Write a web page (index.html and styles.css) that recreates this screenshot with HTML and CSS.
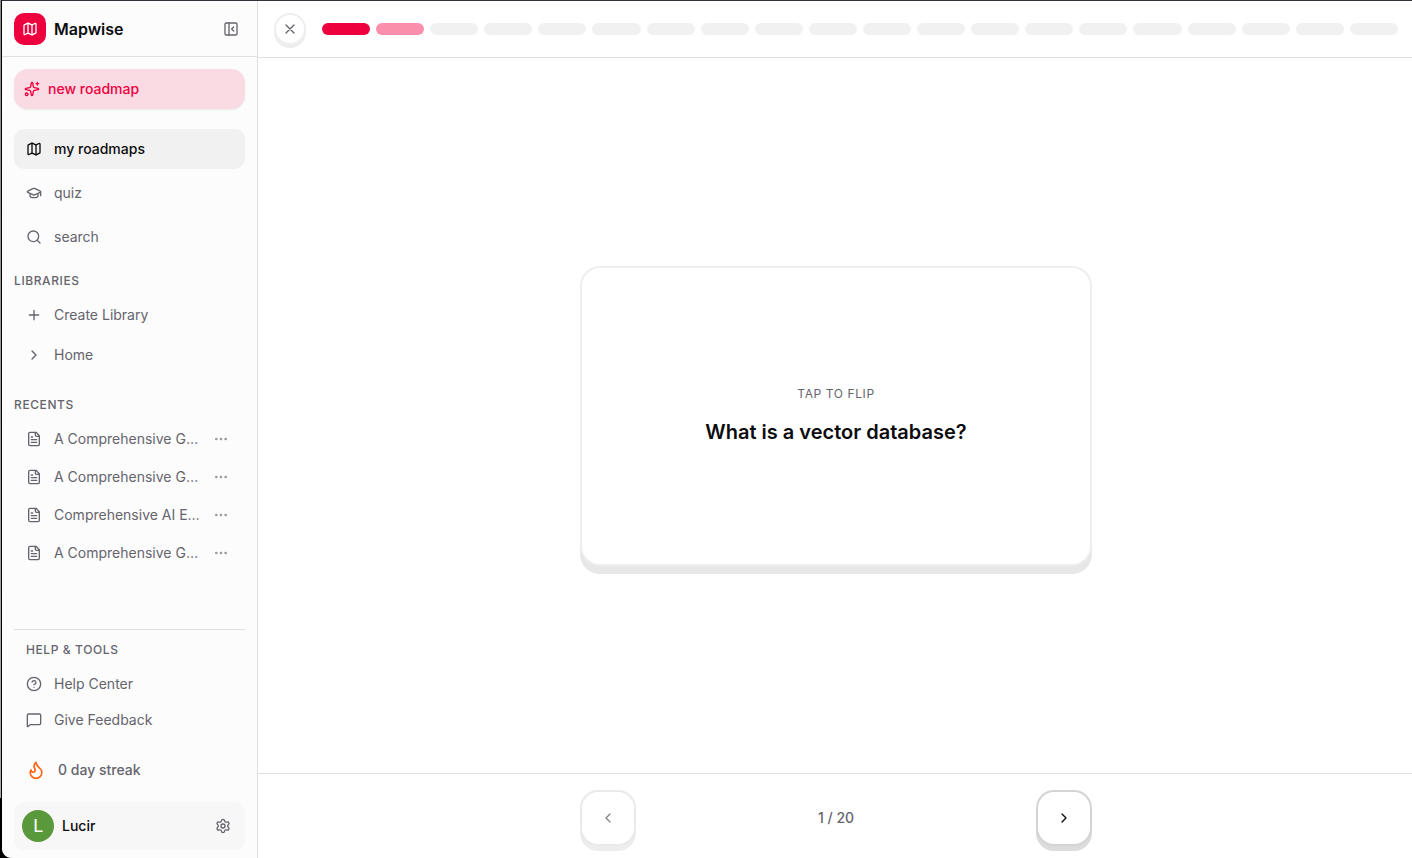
FILE: index.html
```html
<!DOCTYPE html>
<html lang="en">
<head>
    <meta charset="UTF-8">
    <meta name="viewport" content="width=device-width, initial-scale=1.0">
    <title>Mapwise</title>
    <link rel="stylesheet" href="styles.css">
</head>

<body>
    <svg class="sprite" aria-hidden="true">
        <symbol id="i-map" viewBox="0 0 24 24"><path d="M14.106 5.553a2 2 0 0 0 1.788 0l3.659-1.83A1 1 0 0 1 21 4.619v12.764a1 1 0 0 1-.553.894l-4.553 2.277a2 2 0 0 1-1.788 0l-4.212-2.106a2 2 0 0 0-1.788 0l-3.659 1.83A1 1 0 0 1 3 19.381V6.618a1 1 0 0 1 .553-.894l4.553-2.277a2 2 0 0 1 1.788 0z"/><path d="M15 5.764v15M9 3.236v15"/></symbol>
        <symbol id="i-panel" viewBox="0 0 24 24"><rect width="18" height="18" x="3" y="3" rx="2"/><path d="M9 3v18M16 15l-3-3 3-3"/></symbol>
        <symbol id="i-sparkles" viewBox="0 0 24 24"><path d="M11.017 2.814a1 1 0 0 1 1.966 0l1.051 5.558a2 2 0 0 0 1.594 1.594l5.558 1.051a1 1 0 0 1 0 1.966l-5.558 1.051a2 2 0 0 0-1.594 1.594l-1.051 5.558a1 1 0 0 1-1.966 0l-1.051-5.558a2 2 0 0 0-1.594-1.594l-5.558-1.051a1 1 0 0 1 0-1.966l5.558-1.051a2 2 0 0 0 1.594-1.594zM20 2v4M22 4h-4"/><circle cx="4" cy="20" r="2"/></symbol>
        <symbol id="i-cap" viewBox="0 0 24 24"><path d="M21.42 10.922a1 1 0 0 0-.019-1.838L12.83 5.18a2 2 0 0 0-1.66 0L2.6 9.08a1 1 0 0 0 0 1.832l8.57 3.908a2 2 0 0 0 1.66 0zM22 10v6M6 12.5V16a6 3 0 0 0 12 0v-3.5"/></symbol>
        <symbol id="i-search" viewBox="0 0 24 24"><circle cx="11" cy="11" r="8"/><path d="m21 21-4.34-4.34"/></symbol>
        <symbol id="i-plus" viewBox="0 0 24 24"><path d="M5 12h14M12 5v14"/></symbol>
        <symbol id="i-right" viewBox="0 0 24 24"><path d="m9 18 6-6-6-6"/></symbol>
        <symbol id="i-left" viewBox="0 0 24 24"><path d="m15 18-6-6 6-6"/></symbol>
        <symbol id="i-x" viewBox="0 0 24 24"><path d="M18 6 6 18M6 6l12 12"/></symbol>
        <symbol id="i-file" viewBox="0 0 24 24"><path d="M15 2H6a2 2 0 0 0-2 2v16a2 2 0 0 0 2 2h12a2 2 0 0 0 2-2V7ZM14 2v4a2 2 0 0 0 2 2h4M10 9H8M16 13H8M16 17H8"/></symbol>
        <symbol id="i-dots" viewBox="0 0 24 24"><circle cx="12" cy="12" r="1"/><circle cx="19" cy="12" r="1"/><circle cx="5" cy="12" r="1"/></symbol>
        <symbol id="i-help" viewBox="0 0 24 24"><circle cx="12" cy="12" r="10"/><path d="M9.09 9a3 3 0 0 1 5.83 1c0 2-3 3-3 3M12 17h.01"/></symbol>
        <symbol id="i-message" viewBox="0 0 24 24"><path d="M22 17a2 2 0 0 1-2 2H6.828a2 2 0 0 0-1.414.586l-2.202 2.202A.71.71 0 0 1 2 21.286V5a2 2 0 0 1 2-2h16a2 2 0 0 1 2 2z"/></symbol>
        <symbol id="i-flame" viewBox="0 0 24 24"><path d="M8.5 14.5A2.5 2.5 0 0 0 11 12c0-1.38-.5-2-1-3-1.072-2.143-.224-4.054 2-6 .5 2.5 2 4.9 4 6.5 2 1.6 3 3.5 3 5.5a7 7 0 1 1-14 0c0-1.153.433-2.294 1-3a2.5 2.5 0 0 0 2.5 2.5z"/></symbol>
        <symbol id="i-settings" viewBox="0 0 24 24"><path d="M9.671 4.136a2.34 2.34 0 0 1 4.659 0 2.34 2.34 0 0 0 3.319 1.915 2.34 2.34 0 0 1 2.33 4.033 2.34 2.34 0 0 0 0 3.831 2.34 2.34 0 0 1-2.33 4.033 2.34 2.34 0 0 0-3.319 1.915 2.34 2.34 0 0 1-4.659 0 2.34 2.34 0 0 0-3.32-1.915 2.34 2.34 0 0 1-2.33-4.033 2.34 2.34 0 0 0 0-3.831A2.34 2.34 0 0 1 6.35 6.051a2.34 2.34 0 0 0 3.319-1.915"/><circle cx="12" cy="12" r="3"/></symbol>
    </svg>

    <div class="app">
        <aside class="sidebar">
            <header class="sidebar-header">
                <span class="logo"><svg class="icon"><use href="#i-map"/></svg></span>
                <span class="brand">Mapwise</span>
                <button class="icon-btn" type="button" aria-label="Collapse sidebar"><svg class="icon"><use href="#i-panel"/></svg></button>
            </header>

            <div class="sidebar-body">
                <button class="new-btn" type="button"><svg class="icon"><use href="#i-sparkles"/></svg>new roadmap</button>

                <nav class="main-nav">
                    <a class="row active" href="#"><svg class="icon"><use href="#i-map"/></svg>my roadmaps</a>
                    <a class="row" href="#"><svg class="icon"><use href="#i-cap"/></svg>quiz</a>
                    <a class="row" href="#"><svg class="icon"><use href="#i-search"/></svg>search</a>
                </nav>

                <h2 class="group-title">Libraries</h2>
                <div class="libraries">
                    <button class="row" type="button"><svg class="icon"><use href="#i-plus"/></svg>Create Library</button>
                    <button class="row" type="button"><svg class="icon"><use href="#i-right"/></svg>Home</button>
                </div>

                <h2 class="group-title">Recents</h2>
                <ul class="recents">
                    <li>
                        <a class="row" href="#"><svg class="icon"><use href="#i-file"/></svg>A Comprehensive G…</a>
                        <button class="icon-btn more" type="button" aria-label="More"><svg class="icon"><use href="#i-dots"/></svg></button>
                    </li>
                    <li>
                        <a class="row" href="#"><svg class="icon"><use href="#i-file"/></svg>A Comprehensive G…</a>
                        <button class="icon-btn more" type="button" aria-label="More"><svg class="icon"><use href="#i-dots"/></svg></button>
                    </li>
                    <li>
                        <a class="row" href="#"><svg class="icon"><use href="#i-file"/></svg>Comprehensive AI E…</a>
                        <button class="icon-btn more" type="button" aria-label="More"><svg class="icon"><use href="#i-dots"/></svg></button>
                    </li>
                    <li>
                        <a class="row" href="#"><svg class="icon"><use href="#i-file"/></svg>A Comprehensive G…</a>
                        <button class="icon-btn more" type="button" aria-label="More"><svg class="icon"><use href="#i-dots"/></svg></button>
                    </li>
                </ul>
            </div>

            <footer class="sidebar-footer">
                <div class="help">
                    <h2 class="group-title">Help &amp; Tools</h2>
                    <a class="row" href="#"><svg class="icon"><use href="#i-help"/></svg>Help Center</a>
                    <a class="row" href="#"><svg class="icon"><use href="#i-message"/></svg>Give Feedback</a>
                </div>
                <div class="streak"><svg class="icon flame"><use href="#i-flame"/></svg>0 day streak</div>
                <div class="user">
                    <span class="avatar">L</span>
                    <span class="user-name">Lucir</span>
                    <button class="icon-btn" type="button" aria-label="Settings"><svg class="icon"><use href="#i-settings"/></svg></button>
                </div>
            </footer>
        </aside>

        <main class="main">
            <header class="topbar">
                <button class="close-btn" type="button" aria-label="Close"><svg class="icon"><use href="#i-x"/></svg></button>
                <div class="progress">
                    <span class="done"></span>
                    <span class="current"></span>
                    <span></span>
                    <span></span>
                    <span></span>
                    <span></span>
                    <span></span>
                    <span></span>
                    <span></span>
                    <span></span>
                    <span></span>
                    <span></span>
                    <span></span>
                    <span></span>
                    <span></span>
                    <span></span>
                    <span></span>
                    <span></span>
                    <span></span>
                    <span></span>
                </div>
            </header>

            <section class="stage">
                <button class="flashcard" type="button">
                    <span class="hint">Tap to flip</span>
                    <span class="question">What is a vector database?</span>
                </button>
            </section>

            <footer class="pager">
                <div class="pager-inner">
                    <button class="page-btn" type="button" aria-label="Previous" disabled><svg class="icon"><use href="#i-left"/></svg></button>
                    <span class="count">1 / 20</span>
                    <button class="page-btn" type="button" aria-label="Next"><svg class="icon"><use href="#i-right"/></svg></button>
                </div>
            </footer>
        </main>
    </div>
</body>

</html>
```

FILE: styles.css
```css
:root {
    --text: #0c0c0e;
    --muted: #65646d;
    --line: #e0e0e0;
    --brand: #ee003f;
}

* {
    box-sizing: border-box;
}

body {
    margin: 0;
    overflow: hidden;
    background: #000 linear-gradient(#8c8c8c, #aaa) 0 0 / 1px 93% no-repeat;
    color: var(--text);
    font-family: Inter, 'Liberation Sans', sans-serif;
    font-size: 14px;
    line-height: 20px;
}

button {
    padding: 0;
    border: 0;
    background: none;
    color: inherit;
    font: inherit;
}

a {
    color: inherit;
    text-decoration: none;
}

/* Icons */
.sprite {
    display: none;
}

.icon {
    flex: none;
    width: 16px;
    height: 16px;
    fill: none;
    stroke: currentColor;
    stroke-width: 2;
    stroke-linecap: round;
    stroke-linejoin: round;
}

.icon-btn {
    display: flex;
    align-items: center;
    justify-content: center;
    width: 28px;
    height: 28px;
    color: var(--muted);
}

/* Window */
.app {
    display: flex;
    height: 100vh;
    margin: 0 -2px 0 1px;
    border-top: 1px solid #35313a;
    border-left: 1px solid #000;
    border-bottom-left-radius: 10px;
    background: #fff;
    overflow: hidden;
}

/* Sidebar */
.sidebar {
    display: flex;
    flex-direction: column;
    flex: none;
    width: 256px;
    border-right: 1px solid var(--line);
    background: #fcfcfc;
}

.sidebar-header {
    display: flex;
    align-items: center;
    gap: 8px;
    height: 56px;
    padding: 0 12px;
    border-bottom: 1px solid var(--line);
}

.logo {
    display: flex;
    align-items: center;
    justify-content: center;
    width: 32px;
    height: 32px;
    border-radius: 10px;
    background: var(--brand);
    color: #fff;
}

.brand {
    flex: 1;
    font-size: 16px;
    font-weight: 600;
    line-height: 24px;
}

.sidebar-body {
    flex: 1;
    padding: 12px 12px 0;
}

.new-btn {
    display: flex;
    align-items: center;
    gap: 8px;
    width: 100%;
    height: 40px;
    padding: 0 10px;
    border-radius: 14px;
    background: #fadbe3;
    box-shadow: 0 1px 2px rgba(0, 0, 0, 0.08);
    color: var(--brand);
    font-weight: 500;
}

.main-nav {
    display: flex;
    flex-direction: column;
    gap: 4px;
    margin: 20px 0 16px;
}

.row {
    display: flex;
    align-items: center;
    gap: 12px;
    width: 100%;
    height: 40px;
    padding: 0 12px;
    border-radius: 10px;
    color: var(--muted);
    white-space: nowrap;
}

.row.active {
    background: #f1f1f1;
    color: var(--text);
    font-weight: 500;
}

.group-title {
    margin: 0;
    color: var(--muted);
    font-size: 12px;
    font-weight: 500;
    letter-spacing: 0.05em;
    line-height: 16px;
    text-transform: uppercase;
}

.libraries {
    margin: 6px 0 22px;
}

.recents {
    display: flex;
    flex-direction: column;
    gap: 2px;
    margin: 8px 0 0;
    padding: 0;
    list-style: none;
}

.recents li {
    display: flex;
    align-items: center;
    padding-right: 10px;
}

.recents .row,
.help .row {
    height: 36px;
}

.recents .row {
    flex: 1;
    min-width: 0;
    padding-right: 0;
}

.more {
    flex: none;
    color: #9a999f;
}

.sidebar-footer {
    padding: 0 12px 8px;
}

.help {
    padding-top: 12px;
    border-top: 1px solid var(--line);
}

.help .group-title {
    padding: 0 12px;
    margin-bottom: 8px;
}

.streak {
    display: flex;
    align-items: center;
    gap: 12px;
    height: 40px;
    margin: 12px 0;
    padding: 0 12px;
    color: var(--muted);
    font-weight: 500;
}

.flame {
    width: 20px;
    height: 20px;
    color: #ff6417;
}

.user {
    display: flex;
    align-items: center;
    gap: 8px;
    height: 48px;
    padding: 0 8px;
    border-radius: 10px;
    background: #f7f7f7;
}

.avatar {
    width: 32px;
    height: 32px;
    border-radius: 50%;
    background: #5a983c;
    color: #fff;
    font-family: Roboto, sans-serif;
    font-size: 18px;
    line-height: 32px;
    text-align: center;
}

.user-name {
    flex: 1;
    font-weight: 500;
}

/* Flashcards */
.main {
    display: flex;
    flex-direction: column;
    flex: 1;
    min-width: 0;
}

.topbar {
    display: flex;
    align-items: center;
    gap: 16px;
    height: 57px;
    padding: 0 16px;
    border-bottom: 1px solid var(--line);
}

.close-btn {
    display: flex;
    align-items: center;
    justify-content: center;
    width: 32px;
    height: 32px;
    border: 2px solid #eeeeee;
    border-radius: 50%;
    box-shadow: 0 3px 0 #ececec;
    color: var(--muted);
}

.progress {
    display: flex;
    flex: 1;
    gap: 6px;
}

.progress span {
    flex: 1;
    height: 12px;
    border-radius: 6px;
    background: #f1f1f1;
}

.progress .done {
    background: var(--brand);
}

.progress .current {
    background: #fa8fab;
}

.stage {
    display: flex;
    align-items: center;
    justify-content: center;
    flex: 1;
    padding: 16px;
}

.flashcard {
    display: flex;
    flex-direction: column;
    align-items: center;
    justify-content: center;
    gap: 16px;
    width: 100%;
    max-width: 512px;
    height: 300px;
    border: 2px solid #eeeeee;
    border-radius: 20px;
    background: #fff;
    box-shadow: 0 8px 0 #e7e7e7;
}

.hint {
    color: var(--muted);
    font-size: 12px;
    letter-spacing: 0.05em;
    line-height: 16px;
    text-transform: uppercase;
}

.question {
    font-size: 20px;
    font-weight: 600;
    line-height: 28px;
}

.pager {
    padding: 16px 16px 12px;
    border-top: 1px solid var(--line);
}

.pager-inner {
    display: flex;
    align-items: center;
    justify-content: space-between;
    max-width: 512px;
    margin: 0 auto;
}

.page-btn {
    display: flex;
    align-items: center;
    justify-content: center;
    width: 56px;
    height: 56px;
    border: 2px solid #d4d4d4;
    border-radius: 18px;
    background: #fff;
    box-shadow: 0 5px 0 #dcdcdc;
}

.page-btn:disabled {
    border-color: #eaeaea;
    box-shadow: 0 5px 0 #ededed;
    color: #858588;
}

.count {
    color: var(--muted);
    font-weight: 500;
}
```
